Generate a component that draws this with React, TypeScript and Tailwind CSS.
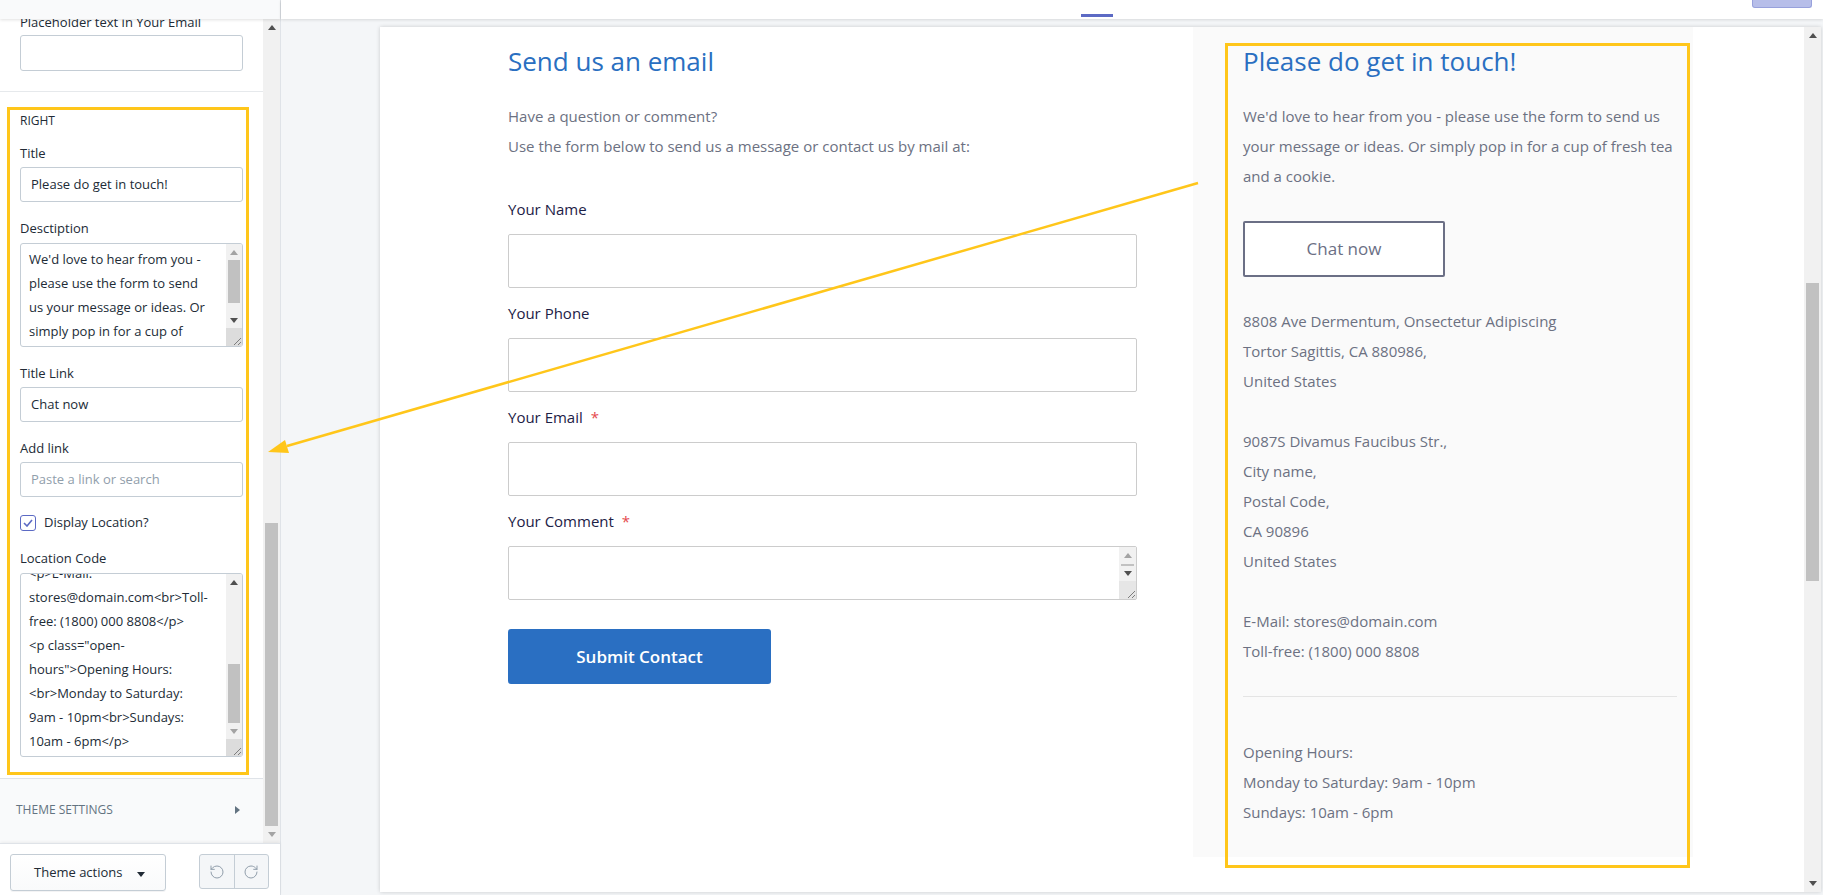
import { RotateCcw, RotateCw } from 'lucide-react'

const UI = "font-['Open_Sans','Liberation_Sans',sans-serif]"
const PV = "font-['Open_Sans','Liberation_Sans',sans-serif]"

function Tri({ dir, color }: { dir: 'up' | 'down' | 'right'; color: string }) {
  if (dir === 'right') {
    return (
      <svg width="5" height="8" viewBox="0 0 5 8">
        <polygon points="0,0 5,4 0,8" fill={color} />
      </svg>
    )
  }
  return (
    <svg width="8" height="5" viewBox="0 0 8 5">
      <polygon points={dir === 'up' ? '0,5 8,5 4,0' : '0,0 8,0 4,5'} fill={color} />
    </svg>
  )
}

function Grip() {
  return (
    <svg width="10" height="10" viewBox="0 0 10 10">
      <path d="M9 2 L2 9 M9 6 L6 9" stroke="#7d7d7d" strokeWidth="1" />
    </svg>
  )
}

function Label({ children }: { children: React.ReactNode }) {
  return <div className="h-[16px] leading-[16px]">{children}</div>
}

function Input({ value, placeholder }: { value?: string; placeholder?: string }) {
  return (
    <div className="mt-[6px] flex h-[35px] items-center rounded-[3px] border border-[#c4cdd5] bg-white pl-[10px]">
      {value ? <span>{value}</span> : <span className="text-[#919eab]">{placeholder}</span>}
    </div>
  )
}

const descLines = [
  "We'd love to hear from you -",
  'please use the form to send',
  'us your message or ideas. Or',
  'simply pop in for a cup of',
]

const codeLines = [
  '<p>E-Mail:',
  'stores@domain.com<br>Toll-',
  'free: (1800) 000 8808</p>',
  '<p class="open-',
  'hours">Opening Hours:',
  '<br>Monday to Saturday:',
  '9am - 10pm<br>Sundays:',
  '10am - 6pm</p>',
]

function Sidebar() {
  return (
    <aside className="flex w-[281px] shrink-0 flex-col border-r border-[#dfe3e8] bg-white text-[13px] text-[#212b36]">
      <div className="relative z-10 h-[19px] shrink-0 bg-[#f9fafb] shadow-[0_1px_3px_rgba(0,0,0,0.12)]" />
      <div className="flex h-[824px] shrink-0">
        <div className="flex w-[263px] flex-col overflow-hidden">
          {/* previous section, scrolled off */}
          <div className="shrink-0 border-b border-[#e6e9ec] px-[20px] pb-[20px]">
            <div className="-mt-[5px] h-[16px] leading-[16px]">Placeholder text in Your Email</div>
            <div className="mt-[5px] h-[36px] rounded-[3px] border border-[#c4cdd5]" />
          </div>

          {/* RIGHT section */}
          <div className="shrink-0 px-[20px] pt-[15px] pb-[3px]">
            <div className="-ml-[13px] -mr-[6px] border-[3px] border-[#ffc61a] pl-[10px] pr-[3px] pb-[15px]">
              <div className="mt-[3px] h-[16px] text-[12px] font-medium leading-[16px]">RIGHT</div>

              <div className="mt-[16px]">
                <Label>Title</Label>
                <Input value="Please do get in touch!" />
              </div>

              <div className="mt-[18px]">
                <Label>Desctiption</Label>
                <div className="mt-[7px] flex h-[104px] overflow-hidden rounded-[3px] border border-[#c4cdd5]">
                  <div className="flex-1 whitespace-nowrap pl-[8px] pt-[3px] leading-[24px]">
                    {descLines.map(l => <div key={l}>{l}</div>)}
                  </div>
                  <div className="flex w-[16px] flex-col bg-[#f1f1f1]">
                    <div className="flex h-[16px] items-center justify-center"><Tri dir="up" color="#a3a3a3" /></div>
                    <div className="flex h-[52px] flex-col">
                      <div className="mx-[2px] h-[43px] bg-[#c1c1c1]" />
                    </div>
                    <div className="flex h-[16px] items-center justify-center"><Tri dir="down" color="#505050" /></div>
                    <div className="flex flex-1 items-end justify-end bg-[#dcdcdc]"><Grip /></div>
                  </div>
                </div>
              </div>

              <div className="mt-[18px]">
                <Label>Title Link</Label>
                <Input value="Chat now" />
              </div>

              <div className="mt-[18px]">
                <Label>Add link</Label>
                <Input placeholder="Paste a link or search" />
              </div>

              <div className="mt-[18px] flex h-[16px] items-center gap-[8px]">
                <div className="flex h-[16px] w-[16px] items-center justify-center rounded-[3px] border border-[#5c6ac4] bg-white">
                  <svg width="10" height="8" viewBox="0 0 10 8">
                    <path d="M1 4 L4 7 L9 1" fill="none" stroke="#5c6ac4" strokeWidth="1.6" />
                  </svg>
                </div>
                <span>Display Location?</span>
              </div>

              <div className="mt-[19px]">
                <Label>Location Code</Label>
                <div className="mt-[7px] flex h-[184px] overflow-hidden rounded-[3px] border border-[#c4cdd5]">
                  <div className="flex-1 overflow-hidden whitespace-nowrap pl-[8px] leading-[24px]">
                    <div className="-mt-[13px]">
                      {codeLines.map(l => <div key={l}>{l}</div>)}
                    </div>
                  </div>
                  <div className="flex w-[16px] flex-col bg-[#f1f1f1]">
                    <div className="flex h-[16px] items-center justify-center"><Tri dir="up" color="#505050" /></div>
                    <div className="flex h-[133px] flex-col">
                      <div className="h-[74px]" />
                      <div className="mx-[2px] h-[59px] bg-[#c1c1c1]" />
                    </div>
                    <div className="flex h-[16px] items-center justify-center"><Tri dir="down" color="#a3a3a3" /></div>
                    <div className="flex flex-1 items-end justify-end bg-[#dcdcdc]"><Grip /></div>
                  </div>
                </div>
              </div>
            </div>
          </div>

          {/* Theme settings */}
          <div className="flex flex-1 items-center justify-between border-t border-[#dfe3e8] bg-[#f9fafb] pb-[2px] pl-[16px] pr-[23px]">
            <span className="text-[12px] uppercase text-[#637381]">Theme settings</span>
            <Tri dir="right" color="#637381" />
          </div>
        </div>

        {/* sidebar scrollbar */}
        <div className="flex w-[17px] flex-col bg-[#f1f1f1]">
          <div className="flex h-[17px] items-center justify-center"><Tri dir="up" color="#505050" /></div>
          <div className="flex flex-1 flex-col">
            <div className="h-[487px]" />
            <div className="mx-[2px] flex-1 bg-[#c1c1c1]" />
          </div>
          <div className="flex h-[17px] items-center justify-center"><Tri dir="down" color="#a3a3a3" /></div>
        </div>
      </div>

      {/* bottom bar */}
      <div className="flex h-[52px] shrink-0 items-start border-t border-[#dfe3e8] pl-[10px] pt-[10px] shadow-[0_-1px_3px_rgba(0,0,0,0.06)]">
        <button className="flex h-[37px] w-[156px] items-center rounded-[3px] border border-[#c4cdd5] bg-gradient-to-b from-white to-[#f9fafb] pl-[23px] text-[13px] text-[#212b36] shadow-[0_1px_0_rgba(22,29,37,0.05)]">
          Theme actions
          <span className="ml-[14px] mt-[3px]"><Tri dir="down" color="#212b36" /></span>
        </button>
        <div className="ml-[33px] flex h-[35px] w-[70px] rounded-[3px] border border-[#c4cdd5] bg-[#f4f6f8]">
          <div className="flex flex-1 items-center justify-center border-r border-[#c4cdd5]">
            <RotateCcw size={16} strokeWidth={1.5} color="#919eab" />
          </div>
          <div className="flex flex-1 items-center justify-center">
            <RotateCw size={16} strokeWidth={1.5} color="#919eab" />
          </div>
        </div>
      </div>
    </aside>
  )
}

function Field({ label, req, area }: { label: string; req?: boolean; area?: boolean }) {
  return (
    <div>
      <div className="flex h-[50px] items-center text-[15px] font-medium text-[#1d2146]">
        {label}
        {req && <span className="ml-[8px] text-[#e5484d]">*</span>}
      </div>
      <div className="flex h-[54px] rounded-[2px] border border-[#cccccc] bg-white">
        <div className="flex-1" />
        {area && (
          <div className="flex w-[17px] flex-col bg-[#f1f1f1]">
            <div className="flex h-[17px] items-center justify-center"><Tri dir="up" color="#a3a3a3" /></div>
            <div className="mx-[2px] h-[2px] bg-[#c1c1c1]" />
            <div className="flex h-[15px] items-center justify-center"><Tri dir="down" color="#505050" /></div>
            <div className="flex flex-1 items-end justify-end bg-[#e6e6e6]"><Grip /></div>
          </div>
        )}
      </div>
    </div>
  )
}

function LeftCol() {
  return (
    <div className="w-[629px] shrink-0 pt-[16px]">
      <h2 className="text-[26px] leading-[36px] text-[#2a6fc1]">Send us an email</h2>
      <div className="mt-[22px] text-[15px] leading-[30px] text-[#6c7182]">
        <div>Have a question or comment?</div>
        <div>Use the form below to send us a message or contact us by mail at:</div>
      </div>
      <div className="mt-[23px]">
        <Field label="Your Name" />
        <Field label="Your Phone" />
        <Field label="Your Email" req />
        <Field label="Your Comment" req area />
      </div>
      <button className="mt-[29px] flex h-[55px] w-[263px] items-center justify-center rounded-[3px] bg-[#2a6fc2] text-[17px] font-semibold text-white">
        Submit Contact
      </button>
    </div>
  )
}

function RightCol() {
  const lines1 = ['8808 Ave Dermentum, Onsectetur Adipiscing', 'Tortor Sagittis, CA 880986,', 'United States']
  const lines2 = ['9087S Divamus Faucibus Str.,', 'City name,', 'Postal Code,', 'CA 90896', 'United States']
  const lines3 = ['E-Mail: stores@domain.com', 'Toll-free: (1800) 000 8808']
  return (
    <div className="ml-[56px] h-[830px] w-[500px] shrink-0 bg-[#fafafa] pl-[50px] pr-[16px] pt-[16px] text-[15px] text-[#6c7182]">
      <h2 className="text-[26px] leading-[36px] text-[#2a6fc1]">Please do get in touch!</h2>
      <div className="mt-[22px] whitespace-nowrap leading-[30px]">
        <div>We'd love to hear from you - please use the form to send us</div>
        <div>your message or ideas. Or simply pop in for a cup of fresh tea</div>
        <div>and a cookie.</div>
      </div>
      <button className="mt-[30px] flex h-[56px] w-[202px] items-center justify-center rounded-[2px] border-2 border-[#6b6f85] bg-white text-[17px] text-[#6b6f85]">
        Chat now
      </button>
      <div className="mt-[29px] leading-[30px]">
        {lines1.map(l => <div key={l}>{l}</div>)}
        <div className="h-[30px]" />
        {lines2.map((l, i) => <div key={l + i}>{l}</div>)}
        <div className="h-[30px]" />
        {lines3.map(l => <div key={l}>{l}</div>)}
      </div>
      <div className="mt-[30px] border-t border-[#e4e4e4]" />
      <div className="mt-[40px] leading-[30px]">
        <div>Opening Hours:</div>
        <div>Monday to Saturday: 9am - 10pm</div>
        <div>Sundays: 10am - 6pm</div>
      </div>
    </div>
  )
}

function Preview() {
  return (
    <main className="flex min-w-0 flex-1 flex-col">
      <div className="relative z-10 flex h-[19px] shrink-0 bg-white shadow-[0_1px_3px_rgba(0,0,0,0.12)]">
        <div className="ml-[800px] mt-[14px] h-[3px] w-[32px] bg-[#5c6ac4]" />
        <div className="ml-auto mr-[11px] h-[8px] w-[60px] rounded-b-[3px] border border-t-0 border-[#98a1dc] bg-[#b7bee9]" />
      </div>
      <div className="min-h-0 flex-1 pb-[3px] pl-[99px] pr-[2px] pt-[8px]">
        <div className={`flex h-full bg-white shadow-[0_0_4px_rgba(0,0,0,0.18)] ${PV}`}>
          <div className="flex min-w-0 flex-1 overflow-hidden pl-[128px]">
            <LeftCol />
            <RightCol />
          </div>
          <div className="flex w-[17px] shrink-0 flex-col bg-[#f1f1f1]">
            <div className="flex h-[17px] items-center justify-center"><Tri dir="up" color="#505050" /></div>
            <div className="flex flex-1 flex-col">
              <div className="h-[239px]" />
              <div className="mx-[2px] h-[298px] bg-[#c1c1c1]" />
            </div>
            <div className="flex h-[17px] items-center justify-center"><Tri dir="down" color="#505050" /></div>
          </div>
        </div>
      </div>
    </main>
  )
}

export default function App() {
  return (
    <div className={`relative flex h-[895px] w-[1823px] overflow-hidden bg-[#f4f6f8] ${UI}`}>
      <Sidebar />
      <Preview />

      {/* annotations */}
      <div className="pointer-events-none absolute left-[1225px] top-[43px] h-[825px] w-[465px] border-[3px] border-[#ffc61a]" />
      <svg className="pointer-events-none absolute left-0 top-0" width="1823" height="895" viewBox="0 0 1823 895">
        <line x1="1198" y1="183" x2="287" y2="446" stroke="#ffc61a" strokeWidth="2.5" />
        <polygon points="268,452 289,453 285,440" fill="#ffc61a" />
      </svg>
    </div>
  )
}
